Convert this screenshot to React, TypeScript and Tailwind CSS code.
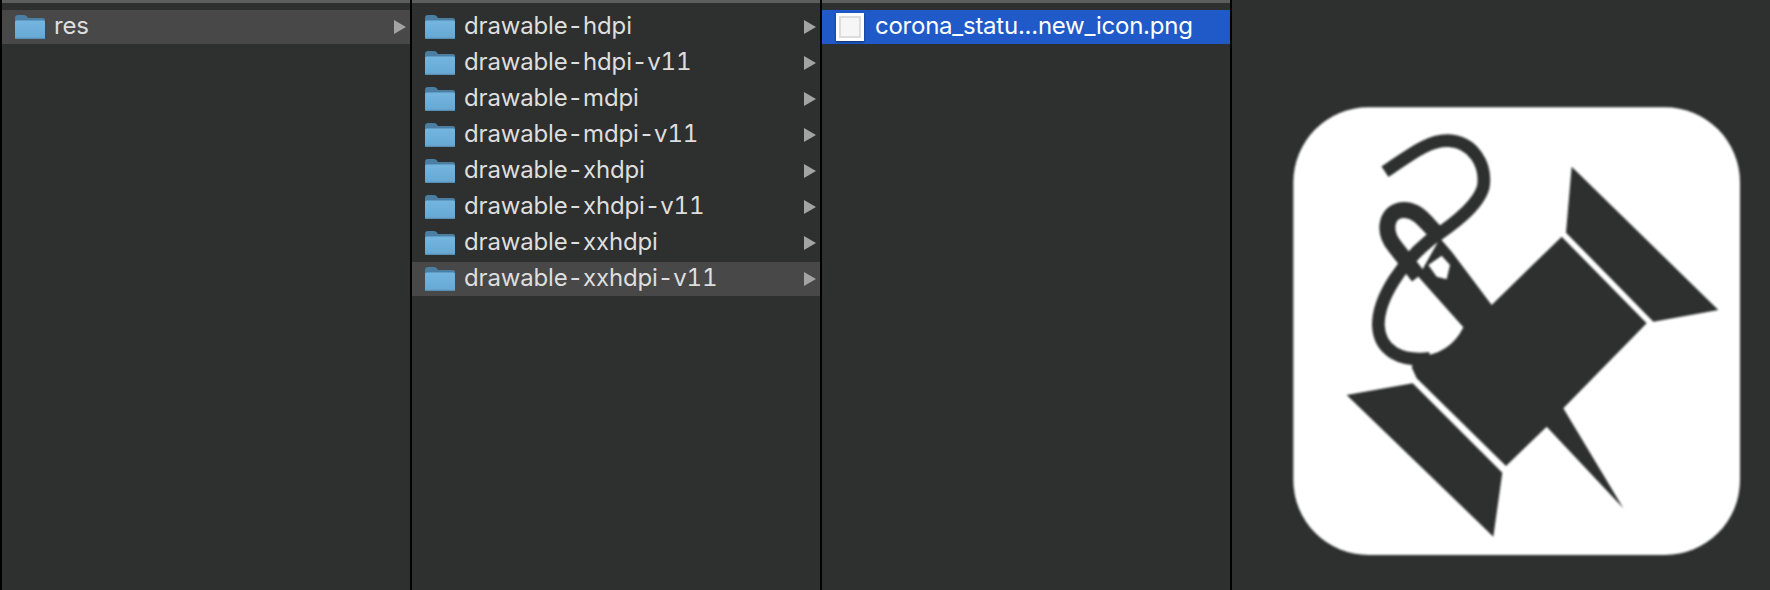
const folders = [
  "drawable-hdpi",
  "drawable-hdpi-v11",
  "drawable-mdpi",
  "drawable-mdpi-v11",
  "drawable-xhdpi",
  "drawable-xhdpi-v11",
  "drawable-xxhdpi",
  "drawable-xxhdpi-v11",
];

function Folder() {
  return (
    <svg width="30" height="24" viewBox="0 0 30 24" className="shrink-0">
      <defs>
        <linearGradient id="folderBody" x1="0" y1="0" x2="0" y2="1">
          <stop offset="0" stopColor="#74b6e0" />
          <stop offset="1" stopColor="#65a8d3" />
        </linearGradient>
      </defs>
      <path d="M0 3 Q0 0 3 0 H9 Q11 0 12 1.500 L13 3 H28 Q30 3 30 5 V12 H0 Z" fill="#4a7fa3" />
      <path d="M0 7 Q0 5.500 1.500 5.500 H28.500 Q30 5.500 30 7 V22.500 Q30 24 28.500 24 H1.500 Q0 24 0 22.500 Z" fill="url(#folderBody)" />
      <rect x="0" y="22.800" width="30" height="1.200" rx="0.600" fill="#5a8fb5" />
    </svg>
  );
}

function Arrow() {
  return (
    <svg width="12" height="14" viewBox="0 0 12 14" className="shrink-0">
      <path d="M0 0 L12 7 L0 14 Z" fill="#a3a3a3" />
    </svg>
  );
}

function TopBar() {
  return <div className="h-[3px] shrink-0 bg-[#5c5d5d]" />;
}

function Row({ label, selected }: { label: string; selected?: boolean }) {
  return (
    <div className={`flex h-[34px] items-center justify-between pl-[13px] pr-[4px] ${selected ? "bg-[#484848]" : ""}`}>
      <div className="flex items-center gap-[9px]">
        <Folder />
        <span className="-mt-[2px] text-[24px] leading-[30px] tracking-[-0.15px] tabular-nums text-[#dedede]">{label}</span>
      </div>
      <Arrow />
    </div>
  );
}

function FileThumb() {
  return (
    <div className="flex h-[28px] w-[28px] items-center justify-center bg-white shadow-[0_1px_2px_rgba(0,0,0,0.5)]">
      <div className="h-[22px] w-[22px] border-2 border-[#dddddd] bg-[#f6f6f6]" />
    </div>
  );
}

function Pin() {
  return (
    <svg width="500" height="500" viewBox="0 0 1500 1500" className="shrink-0 blur-[1px]">
      <rect x="70" y="52" width="1340" height="1343" rx="225" fill="#ffffff" />
      <g fill="#2e2f2f">
        <path d="M905 230 L1345 660 L1150 695 L888 428 Z" />
        <path d="M230 915 L428 880 L697 1148 L670 1340 Z" />
        <path d="M510 445 L545 485 L665 645 L875 440 L1130 700 L880 955 L1060 1255 L830 1010 L708 1128 L440 865 L425 832 L440 800 Q540 795 580 712 L445 560 Z" />
      </g>
      <path d="M475 525 L515 497 L540 525 L530 568 L500 560 Z" fill="#ffffff" />
      <g fill="none" stroke="#2e2f2f" strokeWidth="38" strokeLinecap="butt">
        <path d="M345 245 C420 195 475 150 535 152 C610 155 650 225 640 290 C625 350 540 410 480 450 C400 515 325 620 325 705 C328 785 395 815 480 805" />
        <path d="M445 560 L375 470 C335 420 350 358 405 360 C445 362 465 395 500 430" strokeWidth="48" />
      </g>
    </svg>
  );
}

export default function App() {
  return (
    <div className="flex h-[590px] w-[1770px] overflow-hidden bg-[#2e2f2f] font-['Inter',sans-serif]">
      <div className="flex w-[412px] shrink-0 flex-col border-x-2 border-black">
        <TopBar />
        <div className="pt-[7px]">
          <Row label="res" selected />
        </div>
      </div>
      <div className="flex w-[410px] shrink-0 flex-col border-r-2 border-black">
        <TopBar />
        <div className="flex flex-col gap-[2px] pt-[7px]">
          {folders.map((f, i) => (
            <Row key={f} label={f} selected={i === 7} />
          ))}
        </div>
      </div>
      <div className="flex w-[410px] shrink-0 flex-col border-r-2 border-black">
        <TopBar />
        <div className="pt-[7px]">
          <div className="flex h-[34px] items-center gap-[11px] bg-[#1f5ac8] pl-[14px]">
            <FileThumb />
            <span className="-mt-[2px] text-[24px] leading-[30px] tracking-[-0.25px] text-white">corona_statu...new_icon.png</span>
          </div>
        </div>
      </div>
      <div className="flex flex-1 items-start justify-end pt-[90px]">
        <Pin />
      </div>
    </div>
  );
}
